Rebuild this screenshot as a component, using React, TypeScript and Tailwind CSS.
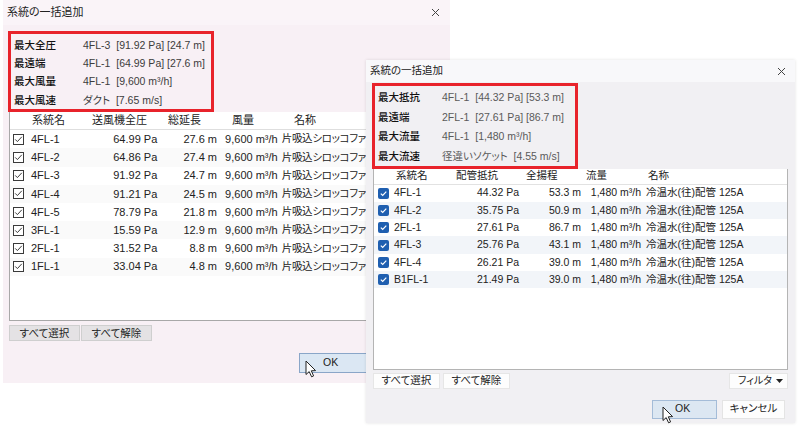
import React from 'react';

const font = { fontFamily: "'Liberation Sans', 'Noto Sans CJK JP', sans-serif" };

const leftRows = [
  ['4FL-1', '64.99 Pa', '27.6 m'],
  ['4FL-2', '64.86 Pa', '27.4 m'],
  ['4FL-3', '91.92 Pa', '24.7 m'],
  ['4FL-4', '91.21 Pa', '24.5 m'],
  ['4FL-5', '78.79 Pa', '21.8 m'],
  ['3FL-1', '15.59 Pa', '12.9 m'],
  ['2FL-1', '31.52 Pa', '8.8 m'],
  ['1FL-1', '33.04 Pa', '4.8 m'],
];

const rightRows = [
  ['4FL-1', '44.32 Pa', '53.3 m'],
  ['4FL-2', '35.75 Pa', '50.9 m'],
  ['2FL-1', '27.61 Pa', '86.7 m'],
  ['4FL-3', '25.76 Pa', '43.1 m'],
  ['4FL-4', '26.21 Pa', '39.0 m'],
  ['B1FL-1', '21.49 Pa', '39.0 m'],
];

const OutlineCheck = () => (
  <svg width="11" height="11" viewBox="0 0 11 11" className="shrink-0">
    <rect x="0.5" y="0.5" width="10" height="10" fill="#fff" stroke="#3a3a3a" strokeWidth="1" />
    <path d="M2.2 5.4 L4.4 7.6 L8.8 2.8" fill="none" stroke="#3a3a3a" strokeWidth="1" />
  </svg>
);

const BlueCheck = () => (
  <svg width="11" height="11" viewBox="0 0 11 11" className="shrink-0">
    <rect x="0" y="0" width="11" height="11" rx="2" fill="#1f5fb0" />
    <path d="M2.8 5.6 L4.7 7.4 L8.3 3.6" fill="none" stroke="#fff" strokeWidth="1.2" />
  </svg>
);

const Cursor = () => (
  <svg width="12" height="18" viewBox="0 0 12 18" className="absolute">
    <path d="M1 1 L1 14.5 L4.2 11.6 L6.6 16.8 L8.6 15.9 L6.3 10.8 L10.6 10.6 Z" fill="#fff" stroke="#222" strokeWidth="1" strokeLinejoin="round" />
  </svg>
);

const Close = () => (
  <svg width="9" height="9" viewBox="0 0 9 9">
    <path d="M1 1 L8 8 M8 1 L1 8" stroke="#444" strokeWidth="1" />
  </svg>
);

function InfoBox({ rows, rowH, labelW, valueColor }: { rows: [string, string][]; rowH: string; labelW: string; valueColor: string }) {
  return (
    <div className="w-[206px] border-[3px] border-[#e8232b] pt-[2px] pl-[3px]">
      {rows.map(([label, value]) => (
        <div key={label} className={`flex items-center ${rowH}`}>
          <span className={`${labelW} shrink-0 text-[10.5px] leading-none font-medium text-[#111]`}>{label}</span>
          <span className={`text-[10.5px] leading-none whitespace-pre ${valueColor}`}>{value}</span>
        </div>
      ))}
    </div>
  );
}

function LeftDialog() {
  return (
    <div className="absolute left-[3px] top-0 w-[447px] h-[383px] bg-[#f8f0f5] flex flex-col" style={font}>
      <div className="h-[25px] flex items-center justify-between pl-[4px] pr-[10px] bg-[#faf4f8]">
        <span className="text-[11px] text-[#222]">系統の一括追加</span>
        <Close />
      </div>
      <div className="pl-[5px] pt-[6px]">
        <InfoBox
          rowH="h-[18.3px]"
          labelW="w-[69px]"
          valueColor="text-[#3c3c3c]"
          rows={[
            ['最大全圧', '4FL-3  [91.92 Pa] [24.7 m]'],
            ['最遠端', '4FL-1  [64.99 Pa] [27.6 m]'],
            ['最大風量', '4FL-1  [9,600 m³/h]'],
            ['最大風速', 'ダクト  [7.65 m/s]'],
          ]}
        />
      </div>
      <div className="ml-[6px] w-[358px] h-[209px] bg-white border border-[#a8a8a8] border-t-0 text-[11px] text-[#222] overflow-hidden">
        <div className="flex h-[18px] items-center border-b border-[#dedede]">
          <div className="w-[77px] pl-[22px]">系統名</div>
          <div className="w-[78px] pl-[5px]">送風機全圧</div>
          <div className="w-[62px] pl-[3px]">総延長</div>
          <div className="w-[63px] pl-[5px]">風量</div>
          <div className="pl-[4px]">名称</div>
        </div>
        {leftRows.map(([name, pa, len], i) => (
          <div key={name} className={`flex h-[18.2px] items-center whitespace-nowrap ${i % 2 === 1 ? 'bg-[#fafafa]' : ''}`}>
            <div className="w-[77px] flex items-center pl-[3px] gap-[7px]">
              <OutlineCheck />
              <span>{name}</span>
            </div>
            <div className="w-[78px] text-right pr-[2px]">{pa}</div>
            <div className="w-[62px] text-right pr-[2px]">{len}</div>
            <div className="w-[63px] text-right pr-[2px]">9,600 m³/h</div>
            <div className="pl-[2px] text-[10.5px] tracking-[-0.3px]">片吸込シロッコファ</div>
          </div>
        ))}
      </div>
      <div className="flex ml-[6px] mt-[4px] gap-[1px]">
        <button className="w-[71px] h-[16px] bg-[#e4e2e4] border border-[#cfcfcf] text-[10.5px] text-[#222] leading-none">すべて選択</button>
        <button className="w-[71px] h-[16px] bg-[#e4e2e4] border border-[#cfcfcf] text-[10.5px] text-[#222] leading-none">すべて解除</button>
      </div>
      <div className="flex mt-[12px] pl-[296px]">
        <div className="relative w-[67px] h-[20px] bg-[#dbe7f3] border border-[#8aa6c8] border-r-0 flex items-center pl-[23px] text-[10.5px] text-[#222]">
          OK
          <div className="absolute left-[5px] top-[6px]"><Cursor /></div>
        </div>
      </div>
    </div>
  );
}

function RightDialog() {
  return (
    <div className="absolute left-[366px] top-[60px] w-[429px] h-[363px] bg-[#f1f0f3] flex flex-col shadow-[0_0_3px_rgba(0,0,0,0.12)]" style={font}>
      <div className="h-[22px] flex items-center justify-between pl-[4px] pr-[9px] bg-[#f8f8fa]">
        <span className="text-[10.5px] text-[#222]">系統の一括追加</span>
        <Close />
      </div>
      <div className="pl-[6px] pt-[1px]">
        <InfoBox
          rowH="h-[19.4px]"
          labelW="w-[64px]"
          valueColor="text-[#5a5a5a]"
          rows={[
            ['最大抵抗', '4FL-1  [44.32 Pa] [53.3 m]'],
            ['最遠端', '2FL-1  [27.61 Pa] [86.7 m]'],
            ['最大流量', '4FL-1  [1,480 m³/h]'],
            ['最大流速', '径違いソケット  [4.55 m/s]'],
          ]}
        />
      </div>
      <div className="ml-[7px] w-[415px] h-[201px] bg-white border border-[#b4b4b4] border-t-0 text-[10.5px] text-[#222] overflow-hidden">
        <div className="flex h-[16px] items-center border-b border-[#e2e2e2]">
          <div className="w-[77px] pl-[22px]">系統名</div>
          <div className="w-[70px] pl-[5px]">配管抵抗</div>
          <div className="w-[62px] pl-[5px]">全揚程</div>
          <div className="w-[60px] pl-[3px]">流量</div>
          <div className="pl-[5px]">名称</div>
        </div>
        {rightRows.map(([name, pa, len], i) => (
          <div key={name} className={`flex h-[17.3px] items-center whitespace-nowrap ${i % 2 === 1 ? 'bg-[#f2f5f9]' : ''}`}>
            <div className="w-[77px] flex items-center pl-[4px] gap-[5px]">
              <BlueCheck />
              <span>{name}</span>
            </div>
            <div className="w-[70px] text-right pr-[2px]">{pa}</div>
            <div className="w-[62px] text-right pr-[2px]">{len}</div>
            <div className="w-[60px] text-right pr-[2px]">1,480 m³/h</div>
            <div className="pl-[3px]">冷温水(往)配管 125A</div>
          </div>
        ))}
      </div>
      <div className="flex items-center ml-[7px] mt-[3px] w-[415px]">
        <button className="w-[67px] h-[16px] bg-[#fdfdfd] border border-[#e6e6e6] text-[10.5px] text-[#222] leading-none">すべて選択</button>
        <button className="ml-[3px] w-[67px] h-[16px] bg-[#fdfdfd] border border-[#e6e6e6] text-[10.5px] text-[#222] leading-none">すべて解除</button>
        <div className="ml-auto w-[59px] h-[16px] bg-[#fdfdfd] border border-[#e6e6e6] flex items-center justify-between pl-[8px] pr-[4px] text-[10px] leading-none text-[#222] whitespace-nowrap">
          <span>フィルタ</span>
          <svg width="7" height="4" viewBox="0 0 7 4" className="shrink-0"><path d="M0 0 L7 0 L3.5 4 Z" fill="#222" /></svg>
        </div>
      </div>
      <div className="flex justify-end items-center mt-[11px] pr-[10px] gap-[5px]">
        <div className="relative w-[65px] h-[19px] bg-[#dce7f2] border border-[#a4bcd8] flex items-center pl-[22px] text-[10.5px] text-[#222]">
          OK
          <div className="absolute left-[9px] top-[5px]"><Cursor /></div>
        </div>
        <div className="w-[63px] h-[19px] bg-[#fdfdfd] border border-[#e4e4e4] flex items-center justify-center text-[10.5px] text-[#222]">キャンセル</div>
      </div>
    </div>
  );
}

export default function App() {
  return (
    <div className="relative w-[800px] h-[426px] bg-white overflow-hidden [font-feature-settings:'palt']">
      <LeftDialog />
      <RightDialog />
    </div>
  );
}
